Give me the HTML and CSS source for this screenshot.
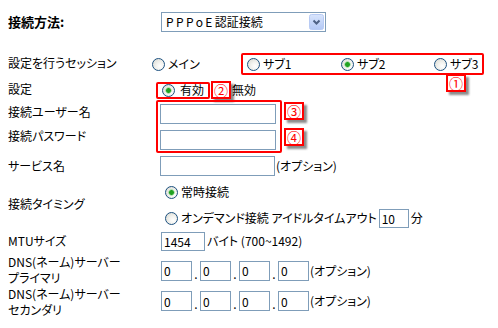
FILE: index.html
```html
<!DOCTYPE html>
<html lang="ja">
<head>
<meta charset="utf-8">
<title>接続設定</title>
<link rel="stylesheet" href="styles.css">
</head>
<body>
<div class="form">
  <div class="row row-method">
    <div class="label bold">接続方法:</div>
    <div class="field">
      <div class="select">
        <span class="select-text"><span class="ls">PPPoE</span>認証接続</span>
        <span class="select-btn"><svg width="15" height="16" viewBox="0 0 15 16"><defs><linearGradient id="g" x1="0" y1="0" x2="0" y2="1"><stop offset="0" stop-color="#d9e5fd"/><stop offset="1" stop-color="#b3c8f5"/></linearGradient></defs><rect x="0.5" y="0.5" width="14" height="15" rx="2" fill="url(#g)" stroke="#b8cbf4"/><path d="M4.5 6.5 L7.5 9.5 L10.5 6.5" fill="none" stroke="#4d6185" stroke-width="2"/></svg></span>
      </div>
    </div>
  </div>

  <div class="row row-session">
    <div class="label">設定を行うセッション</div>
    <div class="field">
      <label class="radio w-main"><input type="radio" name="sess"><span>メイン</span></label>
      <div class="mark mark-sub">
        <label class="radio w-sub1"><input type="radio" name="sess"><span>サブ1</span></label>
        <label class="radio w-sub2"><input type="radio" name="sess" checked><span>サブ2</span></label>
        <label class="radio"><input type="radio" name="sess"><span>サブ3</span></label>
        <span class="badge badge-1">①</span>
      </div>
    </div>
  </div>

  <div class="row row-enable">
    <div class="label">設定</div>
    <div class="field">
      <div class="mark mark-enable">
        <label class="radio"><input type="radio" name="en" checked><span>有効</span></label>
      </div>
      <span class="badge">②</span>
      <span class="text">無効</span>
    </div>
  </div>

  <div class="row row-account">
    <div class="label-stack">
      <div class="label">接続ユーザー名</div>
      <div class="label">接続パスワード</div>
    </div>
    <div class="field field-account">
      <div class="mark mark-inputs">
        <input class="text-input wide" type="text">
        <input class="text-input wide" type="password">
      </div>
      <div class="badge-stack">
        <span class="badge">③</span>
        <span class="badge">④</span>
      </div>
    </div>
  </div>

  <div class="row row-service">
    <div class="label">サービス名</div>
    <div class="field">
      <input class="text-input wide service" type="text">
      <span class="text">(オプション)</span>
    </div>
  </div>

  <div class="row row-timing">
    <div class="label">接続タイミング</div>
    <div class="field field-timing">
      <div class="sub-row">
        <label class="radio"><input type="radio" name="tm" checked><span>常時接続</span></label>
      </div>
      <div class="sub-row">
        <label class="radio"><input type="radio" name="tm"><span>オンデマンド接続 アイドルタイムアウト</span></label>
        <input class="text-input idle" type="text" value="10">
        <span class="text">分</span>
      </div>
    </div>
  </div>

  <div class="row row-mtu">
    <div class="label">MTUサイズ</div>
    <div class="field">
      <input class="text-input mtu" type="text" value="1454">
      <span class="text">バイト (700~1492)</span>
    </div>
  </div>

  <div class="row row-dns1">
    <div class="label two">DNS(ネーム)サーバー<br>プライマリ</div>
    <div class="field">
      <input class="text-input ip" type="text" value="0"><span class="dot">.</span><input class="text-input ip" type="text" value="0"><span class="dot">.</span><input class="text-input ip" type="text" value="0"><span class="dot">.</span><input class="text-input ip" type="text" value="0">
      <span class="text">(オプション)</span>
    </div>
  </div>

  <div class="row row-dns2">
    <div class="label two">DNS(ネーム)サーバー<br>セカンダリ</div>
    <div class="field">
      <input class="text-input ip" type="text" value="0"><span class="dot">.</span><input class="text-input ip" type="text" value="0"><span class="dot">.</span><input class="text-input ip" type="text" value="0"><span class="dot">.</span><input class="text-input ip" type="text" value="0">
      <span class="text">(オプション)</span>
    </div>
  </div>
</div>
</body>
</html>
```

FILE: styles.css
```css
* { box-sizing: border-box; }

html, body {
  background: #ffffff;
}

body {
  margin: 8px 8px 0 8px;
  font-family: "Noto Sans CJK JP", "Noto Sans", sans-serif;
  font-size: 12px;
  line-height: 16px;
  color: #000;
  font-feature-settings: "palt";
}

.form {
  display: flex;
  flex-direction: column;
  width: 482px;
}

.row {
  display: flex;
  align-items: center;
}

.label {
  width: 144px;
  flex: none;
  white-space: nowrap;
}

.label.bold {
  font-weight: bold;
  font-size: 13px;
  line-height: 20px;
}

.label.two {
  line-height: 16px;
}

.field {
  display: flex;
  align-items: center;
  flex: 1;
  position: relative;
}

.text { white-space: nowrap; }

/* rows */
.row-method {
  height: 45px;
  align-items: flex-start;
  padding-top: 4px;
}
.row-method .field { padding-left: 9px; }

.row-session { height: 22px; }
.row-session .label { margin-top: -3px; }

.row-enable { height: 20px; margin-top: 5px; }
.row-enable .label { margin-top: -2px; }
.row-enable .field { padding-left: 4px; }

.row-account { align-items: flex-start; height: 53px; }
.label-stack { display: flex; flex-direction: column; }
.label-stack .label { height: 25px; line-height: 25px; margin-top: -1px; }
.field-account { padding-left: 4px; align-items: flex-start; }

.row-service { height: 26px; }
.row-service .field { padding-left: 8px; }

.row-timing { height: 52px; }
.row-timing .label { margin-top: -2px; }
.field-timing { flex-direction: column; align-items: flex-start; padding-left: 13px; }
.sub-row { height: 26px; display: flex; align-items: center; }

.row-mtu { height: 20px; }
.row-mtu .field { padding-left: 9px; }

.row-dns1 { height: 39px; }
.row-dns1 .label { margin-top: -2px; }
.row-dns1 .field { padding-left: 9px; }

.row-dns2 { height: 33px; align-items: flex-start; }
.row-dns2 .label { margin-top: -4px; }
.row-dns2 .field { padding-left: 9px; padding-top: 1px; }

/* select */
.select {
  width: 165px;
  height: 20px;
  border: 1px solid #7f9db9;
  background: #fff;
  display: flex;
  align-items: center;
  justify-content: space-between;
  padding: 0 1px 0 4px;
}
.select-text {
  font-size: 12px;
  line-height: 16px;
  letter-spacing: 0;
}
.select-text .ls { letter-spacing: 2.4px; }
.select-btn { display: flex; }

/* radios */
.radio {
  display: inline-flex;
  align-items: center;
  white-space: nowrap;
}
.radio span { margin-left: 3px; }

.radio input {
  appearance: none;
  -webkit-appearance: none;
  margin: 0;
  width: 13px;
  height: 13px;
  border-radius: 50%;
  border: 1px solid #1c5180;
  background: radial-gradient(circle at 65% 65%, #ffffff 0%, #f2f2ee 40%, #d6d6ce 100%);
  flex: none;
  position: relative;
}
.radio input:checked {
  background:
    radial-gradient(circle at 50% 50%, #21a121 0, #21a121 2px, #8bd58b 2.6px, rgba(255,255,255,0) 3.6px),
    radial-gradient(circle at 65% 65%, #ffffff 0%, #f2f2ee 40%, #d6d6ce 100%);
}

.w-main { width: 89px; }
.w-sub1 { width: 94px; }
.w-sub2 { width: 93px; }

/* red annotation boxes */
.mark {
  border: 2px solid #ff0000;
  border-radius: 2px;
  display: flex;
  position: relative;
}
.mark-sub {
  width: 243px;
  height: 22px;
  align-items: center;
  padding-left: 4px;
}
.mark-enable {
  width: 54px;
  height: 17px;
  align-items: center;
  padding-left: 4px;
}
.mark-enable .radio span { margin-left: 5px; }

.mark-inputs {
  flex-direction: column;
  gap: 6px;
  width: 126px;
  height: 53px;
  padding: 2px 3px 1px 2px;
}

/* badges */
.badge {
  display: inline-flex;
  align-items: center;
  justify-content: center;
  width: 20px;
  height: 18px;
  border: 2px solid #ff0000;
  background: #fff;
  color: #ff0000;
  font-size: 14px;
  line-height: 14px;
  box-shadow: 3px 3px 2px rgba(0, 0, 0, 0.45);
  flex: none;
}
.badge-1 {
  position: absolute;
  left: 203px;
  top: 19px;
}
.row-enable .badge { margin-left: 1px; margin-right: 1px; }

.badge-stack {
  display: flex;
  flex-direction: column;
  gap: 8px;
  padding-top: 2px;
  margin-left: 2px;
}

/* inputs */
.text-input {
  height: 20px;
  border: 1px solid #7f9db9;
  background: #fff;
  margin: 0;
  padding: 0 2px;
  font-family: "Noto Sans CJK JP", "Noto Sans", sans-serif;
  font-size: 12px;
  color: #000;
  outline: none;
}
.wide { width: 116px; }
.service { width: 115px; margin-right: 1px; }
.idle { width: 30px; height: 19px; margin: 0 2px 0 2px; }
.mtu { width: 44px; height: 19px; margin-right: 2px; }
.ip { width: 31px; }
.dot {
  width: 8px;
  text-align: center;
  align-self: flex-end;
  line-height: 14px;
}
.row-dns1 .text, .row-dns2 .text { margin-left: 1px; }
```
